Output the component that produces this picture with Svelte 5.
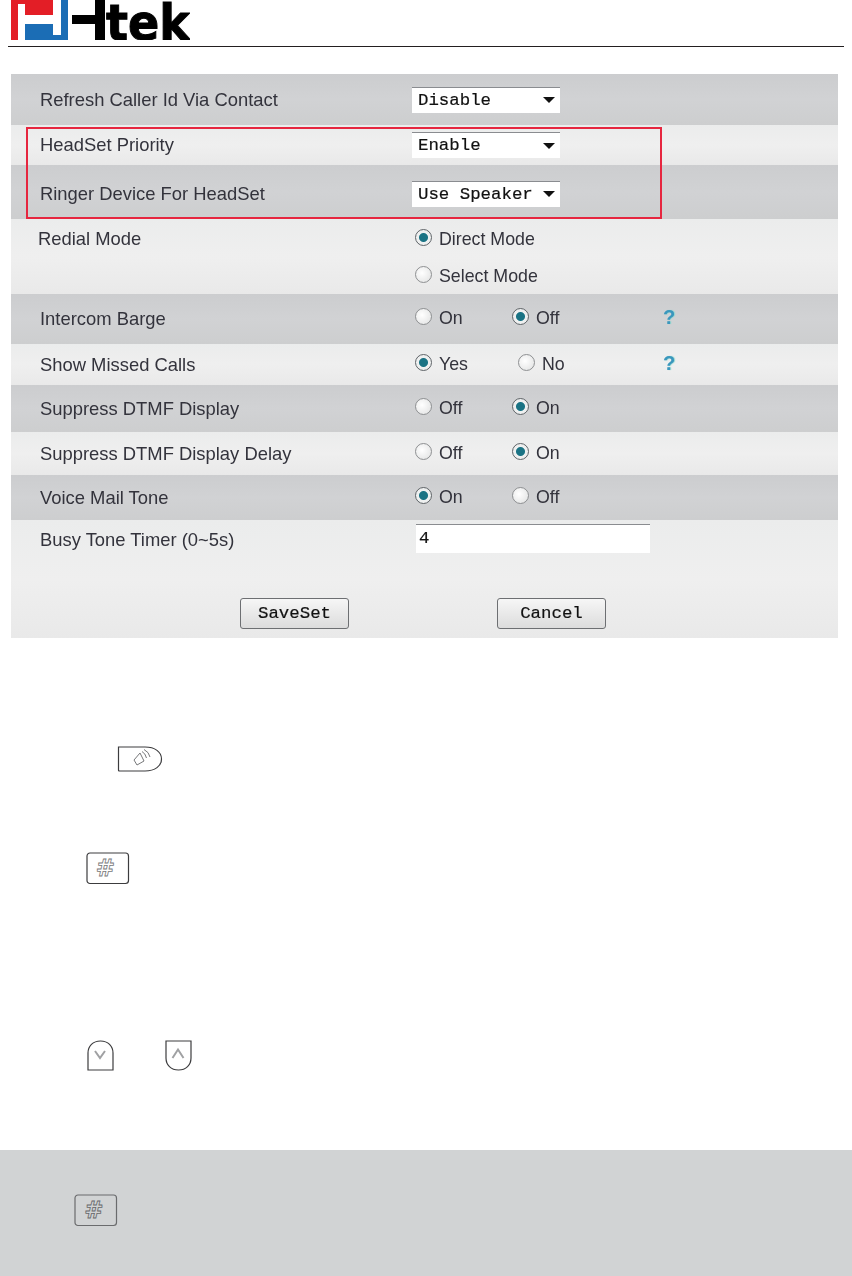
<script lang="ts">
  // settings rows of the phone's web page, heights follow the scanned shot
  const rows = [
    { h: 51, label: 'Refresh Caller Id Via Contact', select: 'Disable' },
    { h: 40, label: 'HeadSet Priority', select: 'Enable' },
    { h: 54, pt: 3, label: 'Ringer Device For HeadSet', select: 'Use Speaker' },
    { h: 75, pt: 9, label: 'Redial Mode', stack: [['Direct Mode', true], ['Select Mode', false]] },
    { h: 50, label: 'Intercom Barge', opts: [['On', false], ['Off', true]], help: true },
    { h: 41, label: 'Show Missed Calls', opts: [['Yes', true], ['No', false]], help: true, wide: true },
    { h: 47, label: 'Suppress DTMF Display', opts: [['Off', false], ['On', true]] },
    { h: 43, label: 'Suppress DTMF Display Delay', opts: [['Off', false], ['On', true]] },
    { h: 45, label: 'Voice Mail Tone', opts: [['On', true], ['Off', false]] },
  ];
</script>

<div class="page">
  <header class="head">
    <svg class="logo" width="190" height="40" viewBox="0 0 190 40">
      <path fill="#e31e26" d="M11 0H53V15H25V4H18V40H11Z" />
      <path fill="#1b6db5" d="M61 0H68V40H25V24H53V35H61Z" />
      <path fill="#000" d="M72 15H95V0H105V40H95V24H72Z" />
      <text class="wordmark" x="106" y="40" textLength="84" lengthAdjust="spacingAndGlyphs">tek</text>
    </svg>
  </header>

  <section class="panel">
    {#each rows as row, i}
      <div class="row" class:alt={i % 2 === 1} class:top={row.stack} style="height: {row.h}px; padding-top: {row.pt ?? 0}px">
        <div class="label" class:inset={row.stack}>{row.label}</div>
        <div class="control">
          {#if row.select}
            <div class="select">
              <span>{row.select}</span>
              <i class="caret"></i>
            </div>
          {:else if row.stack}
            <div class="stack">
              {#each row.stack as [text, on]}
                <div class="opt"><i class="radio" class:on></i>{text}</div>
              {/each}
            </div>
          {:else if row.opts}
            <div class="opts" class:wide={row.wide}>
              {#each row.opts as [text, on]}
                <div class="opt"><i class="radio" class:on></i>{text}</div>
              {/each}
            </div>
            {#if row.help}<span class="help">?</span>{/if}
          {/if}
        </div>
      </div>
    {/each}

    <div class="row alt last">
      <div class="busy">
        <div class="label">Busy Tone Timer (0~5s)</div>
        <div class="input">4</div>
      </div>
      <div class="actions">
        <div class="btn-slot"><button>SaveSet</button></div>
        <div class="btn-slot"><button>Cancel</button></div>
      </div>
    </div>

    <div class="redbox"></div>
  </section>

  <div class="keys">
    <div class="key-speaker">
      <svg width="46" height="26" viewBox="0 0 46 26">
        <path class="edge" d="M1.500 1H28C38 1 44.500 6 44.500 13S38 25 28 25H2.500Q1.500 25 1.500 24Z" />
        <g class="glyph thin">
          <path d="M17 14L23 7L27 15L20 19Z" />
          <path d="M25 5.500Q28.500 7.500 29.500 12" />
          <path d="M27 3.500Q32 6 33 11" />
        </g>
      </svg>
    </div>
    <div class="key-hash">
      <svg width="44" height="33" viewBox="0 0 44 33">
        <rect class="edge" x="1" y="1" width="41.500" height="30.500" rx="3" />
        <text class="hash" x="19.500" y="24">#</text>
      </svg>
    </div>
    <div class="key-arrows">
      <svg width="27" height="31" viewBox="0 0 27 31">
        <path class="edge" d="M1 30V13C1 6 6 1 13.500 1S26 6 26 13V30Z" />
        <path class="glyph" d="M8 11L13 18L18 11" />
      </svg>
      <svg width="27" height="31" viewBox="0 0 27 31">
        <path class="edge" d="M1 1V18C1 25 6 30 13.500 30S26 25 26 18V1Z" />
        <path class="glyph" d="M7.500 18L13 9.500L18.500 18" />
      </svg>
    </div>
  </div>

  <section class="note">
    <svg width="44" height="33" viewBox="0 0 44 33">
      <rect class="edge soft" x="1" y="1" width="41.500" height="30.500" rx="3" />
      <text class="hash grey" x="20" y="24">#</text>
    </svg>
  </section>
</div>

<style>
  :global(body) {
    margin: 0;
    background: #fff;
  }

  .page {
    width: 852px;
    height: 1276px;
    overflow: hidden;
    display: flex;
    flex-direction: column;
    font-family: "Liberation Sans", Arial, sans-serif;
  }

  .head {
    height: 46px;
    margin: 0 8px;
    border-bottom: 1px solid #231f20;
    box-sizing: content-box;
  }

  .logo {
    display: block;
    margin-left: -8px;
  }

  .wordmark {
    font-family: "DejaVu Sans", sans-serif;
    font-weight: 700;
    font-size: 50px;
    fill: #000;
    stroke: #000;
    stroke-width: 1;
  }

  .panel {
    position: relative;
    margin: 27px 14px 0 11px;
    filter: blur(0.55px);
  }

  .row {
    display: flex;
    align-items: center;
    box-sizing: border-box;
    background: linear-gradient(#cccdcf, #d1d2d4 50%, #cdcecf);
    color: #33333c;
    font-size: 18.400px;
  }

  .row.alt {
    background: linear-gradient(#ebecec, #efefef 50%, #e9e9e9);
  }

  .row.top {
    align-items: flex-start;
  }

  .label {
    width: 372px;
    padding-left: 29px;
    box-sizing: border-box;
    flex-shrink: 0;
    white-space: nowrap;
  }

  .label.inset {
    padding-left: 27px;
  }

  .control {
    display: flex;
    align-items: center;
    flex: 1;
  }

  .select {
    width: 148px;
    height: 26px;
    margin-left: 29px;
    background: #fff;
    border-top: 1px solid #8a8c90;
    box-sizing: border-box;
    display: flex;
    align-items: center;
    justify-content: space-between;
    padding: 0 5px 0 6px;
    font-family: "Liberation Mono", monospace;
    font-size: 17.400px;
    color: #111;
    -webkit-text-stroke: 0.2px #111;
    white-space: pre;
  }

  .caret {
    width: 0;
    height: 0;
    border: 6px solid transparent;
    border-top: 6px solid #111;
    border-bottom: 0;
  }

  .stack {
    display: flex;
    flex-direction: column;
    gap: 15px;
    margin-left: 29px;
    padding-left: 3px;
    font-size: 17.800px;
  }

  .opts {
    display: grid;
    grid-template-columns: 97px 60px;
    width: 245px;
    margin: -2px 0 0 29px;
    padding-left: 3px;
    font-size: 17.800px;
  }

  .opts.wide {
    grid-template-columns: 103px 60px;
  }

  .opt {
    display: flex;
    align-items: center;
    gap: 7px;
    line-height: 22px;
  }

  .radio {
    width: 17px;
    height: 17px;
    margin-top: -3px;
    border-radius: 50%;
    border: 1px solid #8e9092;
    background: radial-gradient(circle at 40% 40%, #fff, #dfe0e0);
    box-sizing: border-box;
    flex-shrink: 0;
  }

  .radio.on {
    background: radial-gradient(circle, #1a7384 0 4px, #eef0f0 5px 100%);
    border-color: #5f6468;
  }

  .help {
    margin: -4px 0 0 3px;
    font-weight: 700;
    font-size: 20px;
    line-height: 20px;
    color: #3a97bd;
    text-shadow: 1px 0 1px #8fd6d0;
  }

  .last {
    display: block;
    height: 118px;
  }

  .busy {
    display: flex;
    align-items: center;
    height: 35px;
    padding-top: 2px;
    box-sizing: content-box;
  }

  .busy .label {
    width: 405px;
  }

  .input {
    width: 234px;
    height: 29px;
    margin-top: -2px;
    box-sizing: border-box;
    background: #fff;
    border-top: 1px solid #8a8c90;
    padding: 4px 3px;
    font-family: "Liberation Mono", monospace;
    font-size: 17.400px;
    color: #111;
    -webkit-text-stroke: 0.2px #111;
  }

  .actions {
    display: flex;
    margin-top: 41px;
    padding-left: 229px;
  }

  .btn-slot {
    width: 257px;
  }

  button {
    display: block;
    width: 109px;
    height: 31px;
    padding: 0;
    border: 1px solid #6d6f72;
    border-radius: 3px;
    background: linear-gradient(#f6f6f6, #dcdcdc);
    font-family: "Liberation Mono", monospace;
    font-size: 17.400px;
    color: #111;
    -webkit-text-stroke: 0.2px #111;
  }

  .redbox {
    position: absolute;
    left: 15px;
    top: 53px;
    width: 636px;
    height: 92px;
    border: 2px solid #e6263f;
    box-sizing: border-box;
  }

  .keys {
    position: relative;
    flex: 1;
  }

  .key-speaker {
    margin: 108px 0 0 117px;
    height: 26px;
  }

  .key-hash {
    margin: 80px 0 0 86px;
    height: 33px;
  }

  .key-arrows {
    display: flex;
    gap: 51px;
    margin: 155px 0 0 87px;
  }

  .keys svg,
  .note svg {
    display: block;
  }

  .edge {
    fill: none;
    stroke: #3c3c3e;
    stroke-width: 1.200;
  }

  .edge.soft {
    stroke: #6a6b6d;
  }

  .glyph {
    fill: none;
    stroke: #a0a1a3;
    stroke-width: 2;
  }

  .glyph.thin {
    stroke: #77787a;
    stroke-width: 1;
  }

  .hash {
    font-family: "DejaVu Sans", sans-serif;
    font-weight: 700;
    font-size: 23px;
    text-anchor: middle;
    fill: #fff;
    stroke: #77787a;
    stroke-width: 0.8;
  }

  .hash.grey {
    fill: #d1d3d4;
    stroke: #66676a;
  }

  .note {
    height: 126px;
    box-sizing: border-box;
    background: #d1d3d4;
    padding: 44px 0 0 74px;
  }
</style>
